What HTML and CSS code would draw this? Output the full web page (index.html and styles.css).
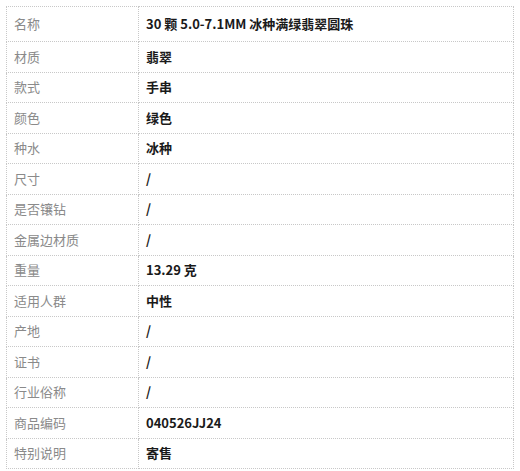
FILE: index.html
```html
<!DOCTYPE html>
<html lang="zh">
<head>
<meta charset="utf-8">
<link rel="stylesheet" href="styles.css">
</head>
<body>
<div class="wrap">
<table class="spec">
<tr class="first"><td class="k">名称</td><td class="v">30 颗 5.0-7.1MM 冰种满绿翡翠圆珠</td></tr>
<tr><td class="k">材质</td><td class="v">翡翠</td></tr>
<tr><td class="k">款式</td><td class="v">手串</td></tr>
<tr><td class="k">颜色</td><td class="v">绿色</td></tr>
<tr><td class="k">种水</td><td class="v">冰种</td></tr>
<tr><td class="k">尺寸</td><td class="v">/</td></tr>
<tr><td class="k">是否镶钻</td><td class="v">/</td></tr>
<tr><td class="k">金属边材质</td><td class="v">/</td></tr>
<tr><td class="k">重量</td><td class="v">13.29 克</td></tr>
<tr><td class="k">适用人群</td><td class="v">中性</td></tr>
<tr><td class="k">产地</td><td class="v">/</td></tr>
<tr><td class="k">证书</td><td class="v">/</td></tr>
<tr><td class="k">行业俗称</td><td class="v">/</td></tr>
<tr><td class="k">商品编码</td><td class="v">040526JJ24</td></tr>
<tr><td class="k">特别说明</td><td class="v">寄售</td></tr>
</table>
</div>
</body>
</html>
```
FILE: styles.css
```css
html, body {
  margin: 0;
  padding: 0;
  background: #fff;
}
.wrap {
  padding: 6px;
}
.spec {
  width: 508px;
  border-collapse: collapse;
  table-layout: fixed;
  font-family: "Noto Sans CJK SC", "Noto Sans", sans-serif;
  font-size: 13px;
}
.spec td {
  border: 1px dotted #c8c8c8;
  height: 29.5px;
  padding: 0 0 0 7px;
  vertical-align: middle;
  line-height: 16px;
}
.spec tr.first td {
  height: 34px;
}
.spec .k {
  width: 124px;
  color: #8a8a8a;
}
.spec .v {
  color: #1a1a1a;
  font-weight: bold;
}
```
